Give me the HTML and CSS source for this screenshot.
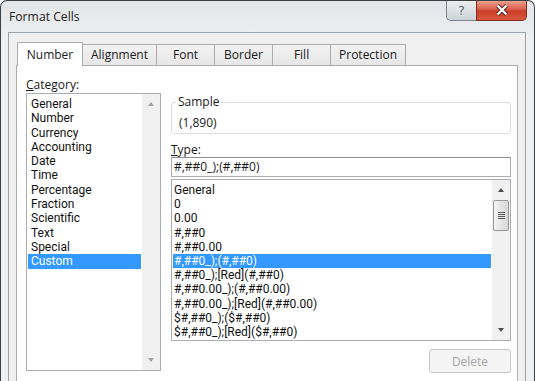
FILE: index.html
```html
<!DOCTYPE html>
<html lang="en">
<head>
<meta charset="UTF-8" />
<title>Format Cells</title>
<link rel="stylesheet" href="styles.css">
</head>
<body>
<div class="window">
  <div class="titlebar">
    <span class="title">Format Cells</span>
    <div class="caption-buttons">
      <button class="cap help">?</button>
      <button class="cap close">
        <svg width="16" height="12" viewBox="0 0 16 12">
          <path d="M3.5 1.5 L12.5 10.5 M12.5 1.5 L3.5 10.5" stroke="#5a2a22" stroke-width="4.2" />
          <path d="M3.5 1.5 L12.5 10.5 M12.5 1.5 L3.5 10.5" stroke="#fff" stroke-width="2.2" />
        </svg>
      </button>
    </div>
  </div>

  <div class="client">
    <div class="tabs">
      <div class="tab active">Number</div>
      <div class="tab">Alignment</div>
      <div class="tab">Font</div>
      <div class="tab">Border</div>
      <div class="tab">Fill</div>
      <div class="tab">Protection</div>
    </div>

    <div class="pane">
      <!-- left column: category list -->
      <div class="category">
        <div class="field-label"><u>C</u>ategory:</div>
        <div class="listbox category-list">
          <ul class="items">
            <li>General</li>
            <li>Number</li>
            <li>Currency</li>
            <li>Accounting</li>
            <li>Date</li>
            <li>Time</li>
            <li>Percentage</li>
            <li>Fraction</li>
            <li>Scientific</li>
            <li>Text</li>
            <li>Special</li>
            <li class="selected">Custom</li>
          </ul>
          <div class="scrollbar disabled">
            <span class="scroll-btn"><span class="arrow up"></span></span>
            <span class="track"></span>
            <span class="scroll-btn"><span class="arrow down"></span></span>
          </div>
        </div>
      </div>

      <!-- right column: sample, type and format codes -->
      <div class="format">
        <fieldset class="sample">
          <legend>Sample</legend>
          <div class="sample-value">(1,890)</div>
        </fieldset>

        <div class="field-label"><u>T</u>ype:</div>
        <div class="type-input">#,##0_);(#,##0)</div>

        <div class="listbox type-list">
          <ul class="items">
            <li>General</li>
            <li>0</li>
            <li>0.00</li>
            <li>#,##0</li>
            <li>#,##0.00</li>
            <li class="selected">#,##0_);(#,##0)</li>
            <li>#,##0_);[Red](#,##0)</li>
            <li>#,##0.00_);(#,##0.00)</li>
            <li>#,##0.00_);[Red](#,##0.00)</li>
            <li>$#,##0_);($#,##0)</li>
            <li>$#,##0_);[Red]($#,##0)</li>
          </ul>
          <div class="scrollbar">
            <span class="scroll-btn"><span class="arrow up"></span></span>
            <span class="thumb"><span class="grip"></span></span>
            <span class="track"></span>
            <span class="scroll-btn"><span class="arrow down"></span></span>
          </div>
        </div>

        <div class="actions">
          <button class="delete" disabled>Delete</button>
        </div>
      </div>
    </div>
  </div>
</div>
</body>
</html>
```

FILE: styles.css
```css
body {
  margin: 0;
  background-color: #fff;
  font-family: 'Open Sans', 'Liberation Sans', sans-serif;
  font-size: 12px;
  color: #1a1a1a;
  overflow: hidden;
}
.window {
  width: 535px;
  height: 420px;
  box-sizing: border-box;
  border: 1px solid #3c3f44;
  border-bottom: none;
  border-radius: 7px 7px 0 0;
  background: linear-gradient(#e2e5e8, #eef0f2 40px, #eef0f2);
  overflow: hidden;
}
.titlebar {
  height: 31px;
  display: flex;
  justify-content: space-between;
  align-items: flex-start;
  padding: 0 7px 0 8px;
}
.title {
  line-height: 31px;
  font-size: 12.2px;
  color: #222;
}
.caption-buttons {
  display: flex;
  margin-top: -1px;
}
.cap {
  height: 21px;
  border: 1px solid #7d848c;
  border-top: none;
  padding: 0;
  display: flex;
  align-items: center;
  justify-content: center;
}
.help {
  width: 30px;
  border-radius: 0 0 0 5px;
  border-right: none;
  background: linear-gradient(#eef0f3, #dde1e5 50%, #cdd2d8);
  font-family: 'DejaVu Sans', sans-serif;
  font-size: 13px;
  color: #5d6167;
  text-shadow: 0 1px 0 #fff;
}
.close {
  width: 51px;
  border-color: #7e2f22;
  border-radius: 0 0 5px 0;
  background: linear-gradient(#eaa898, #db624c 45%, #cc3d26 55%, #d8583e);
}
.client {
  margin: 0 8px 0 7px;
  height: 400px;
  border: 1px solid #9da3aa;
  border-bottom: none;
  background-color: #f0f0f0;
  padding: 9px 7px 0;
}
.tabs {
  display: flex;
  align-items: flex-end;
  height: 23px;
  padding-left: 1px;
}
.tab {
  height: 21px;
  box-sizing: border-box;
  min-width: 58px;
  padding: 0 8px;
  border: 1px solid #acacac;
  border-bottom: none;
  border-left: none;
  background: linear-gradient(#f3f3f3, #e6e6e6);
  line-height: 20px;
  text-align: center;
}
.tab.active {
  height: 24px;
  min-width: 66px;
  margin-bottom: -1px;
  border-left: 1px solid #acacac;
  background: #fff;
  position: relative;
  z-index: 1;
  line-height: 23px;
}
.pane {
  border: 1px solid #acacac;
  background-color: #fff;
  height: 330px;
  padding: 11px 6px 0 9px;
  display: flex;
  gap: 10px;
}
.category {
  width: 135px;
}
.format {
  flex: 1;
}
.field-label {
  line-height: 15px;
}
.listbox {
  display: flex;
  box-sizing: border-box;
  border: 1px solid #abadb3;
  background-color: #fff;
}
.category-list {
  margin-top: 1px;
  height: 278px;
}
.items {
  flex: 1;
  list-style: none;
  margin: 0;
  padding: 3px 1px 0;
  font-family: Roboto, 'Open Sans', sans-serif;
  font-size: 12px;
  color: #111;
}
.items li {
  line-height: 14.3px;
  height: 14.3px;
  padding-left: 3px;
  white-space: nowrap;
}
.type-list .items li {
  line-height: 14.2px;
  height: 14.2px;
  padding-left: 1px;
}
.items li.selected {
  background-color: #3399ff;
  color: #fff;
}
.scrollbar {
  width: 18px;
  display: flex;
  flex-direction: column;
  background-color: #f0f0f0;
}
.scroll-btn {
  height: 20px;
  display: flex;
  align-items: center;
  justify-content: center;
}
.track {
  flex: 1;
}
.arrow {
  width: 0;
  height: 0;
  border-left: 3.5px solid transparent;
  border-right: 3.5px solid transparent;
}
.arrow.up {
  border-bottom: 4px solid #4d4d4d;
}
.arrow.down {
  border-top: 4px solid #4d4d4d;
}
.scrollbar.disabled .arrow.up {
  border-bottom-color: #a3a3a3;
}
.scrollbar.disabled .arrow.down {
  border-top-color: #a3a3a3;
}
.thumb {
  height: 31px;
  margin: 0 1px;
  box-sizing: border-box;
  border: 1px solid #979797;
  border-radius: 2px;
  background: linear-gradient(90deg, #f4f4f4, #e4e4e4 50%, #d8d8d8);
  display: flex;
  align-items: center;
  justify-content: center;
}
.grip {
  width: 7px;
  height: 7px;
  background: repeating-linear-gradient(#5f5f5f 0 1px, transparent 1px 2px);
}
.sample {
  margin: 18px 0 0;
  padding: 6px 4px 3px;
  border: 1px solid #dcdcdc;
  border-radius: 3px;
}
.sample legend {
  padding: 0 2px;
  line-height: 14px;
}
.sample-value {
  line-height: 15px;
  padding-left: 3px;
}
.sample + .field-label {
  margin-top: 8px;
}
.type-input {
  height: 20px;
  box-sizing: border-box;
  border: 1px solid #abadb3;
  border-top-color: #8c8f96;
  padding-left: 2px;
  line-height: 18px;
}
.type-list {
  margin-top: 2px;
  height: 162px;
}
.actions {
  display: flex;
  justify-content: flex-end;
  margin-top: 8px;
}
.delete {
  width: 82px;
  height: 24px;
  border: 1px solid #c6c6c6;
  border-radius: 3px;
  background-color: #f4f4f4;
  font-family: inherit;
  font-size: 12px;
  color: #a6a6a6;
}
```
